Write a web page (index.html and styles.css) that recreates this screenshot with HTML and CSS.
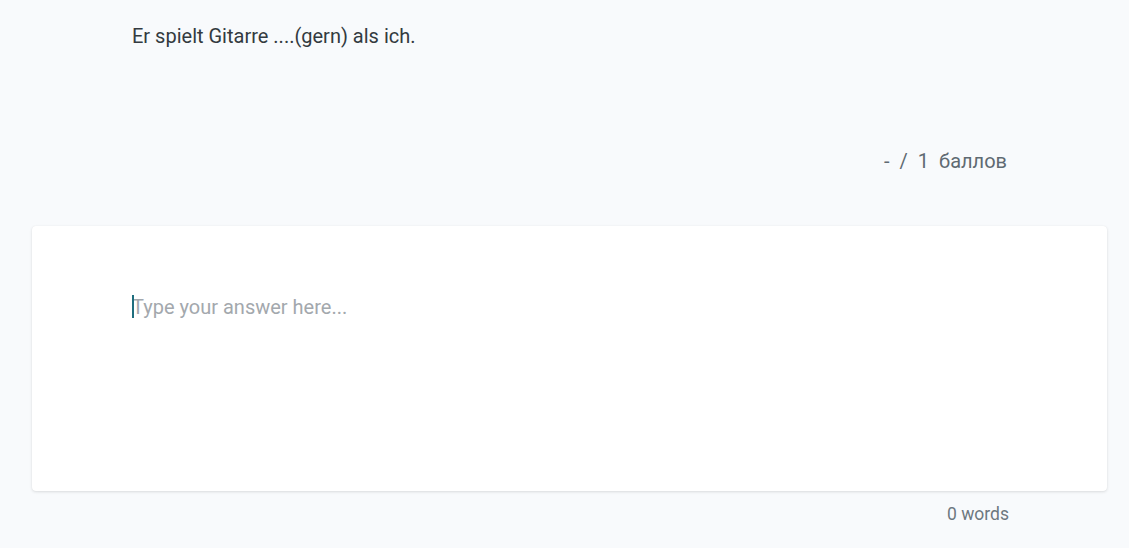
FILE: index.html
```html
<!DOCTYPE html>
<html lang="de">
<head>
<meta charset="utf-8">
<link rel="stylesheet" href="styles.css">
</head>
<body>
<main class="page">
  <section class="question">
    <p class="question-text">Er spielt Gitarre ....(gern) als ich.</p>
    <div class="score"><span>-</span><span>/</span><span>1</span><span>баллов</span></div>
  </section>
  <div class="answer-card">
    <div class="answer-input"><span class="caret"></span><span class="placeholder">Type your answer here...</span></div>
  </div>
  <div class="word-count">0 words</div>
</main>
</body>
</html>
```
FILE: styles.css
```css
html, body {
  margin: 0;
  padding: 0;
  background: #f8fafc;
  font-family: Roboto, "Noto Sans", sans-serif;
}
.page {
  padding: 0 22px 0 32px;
  height: 548px;
  box-sizing: border-box;
  overflow: hidden;
}
.question {
  padding: 0 100px 0 100px;
}
.question-text {
  margin: 0;
  padding-top: 24px;
  font-size: 20px;
  line-height: 24px;
  color: #333a40;
}
.score {
  display: flex;
  justify-content: flex-end;
  gap: 10px;
  margin-top: 101px;
  margin-right: 0;
  font-size: 20px;
  line-height: 24px;
  color: #5f6a72;
}
.answer-card {
  margin-top: 53px;
  height: 265px;
  background: #ffffff;
  border-radius: 4px;
  box-shadow: 0 1px 3px rgba(0, 0, 0, 0.12), 0 0 1px rgba(0, 0, 0, 0.06);
  padding: 68px 100px 0 100px;
  box-sizing: border-box;
}
.answer-input {
  position: relative;
  font-size: 20px;
  line-height: 26px;
  color: #a3a8ad;
}
.caret {
  position: absolute;
  left: 0;
  top: 1px;
  width: 1.5px;
  height: 23px;
  background: #1f6e7e;
}
.word-count {
  margin-top: 12px;
  padding-right: 98px;
  text-align: right;
  font-size: 17.5px;
  line-height: 22px;
  color: #6d7880;
}
```
